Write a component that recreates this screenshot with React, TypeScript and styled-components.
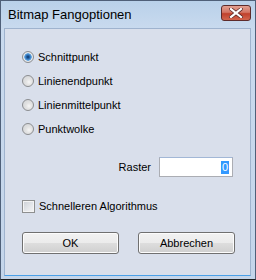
import React from "react";
import styled, { createGlobalStyle } from "styled-components";

const GlobalStyle = createGlobalStyle`
  html, body {
    margin: 0;
    padding: 0;
    background: #ffffff;
  }
`;

const options = ["Schnittpunkt", "Linienendpunkt", "Linienmittelpunkt", "Punktwolke"];

const App = () => {
  return (
    <>
      <GlobalStyle />
      <Window>
        <TitleBar>
          <Title>Bitmap Fangoptionen</Title>
          <CloseButton>
            <svg width="14" height="10" viewBox="0 0 14 10">
              <path d="M2 1 L12 9 M12 1 L2 9" stroke="#5b2a2a" strokeWidth="3.6" strokeLinecap="square" />
              <path d="M2 1 L12 9 M12 1 L2 9" stroke="#ffffff" strokeWidth="2.2" strokeLinecap="square" />
            </svg>
          </CloseButton>
        </TitleBar>
        <Client>
          <RadioList>
            {options.map((label, i) => (
              <OptionRow key={label}>
                <Radio checked={i === 0} />
                <Label>{label}</Label>
              </OptionRow>
            ))}
          </RadioList>
          <RasterRow>
            <Label>Raster</Label>
            <TextBox>
              <Selected>0</Selected>
            </TextBox>
          </RasterRow>
          <OptionRow>
            <CheckBox />
            <Label>Schnelleren Algorithmus</Label>
          </OptionRow>
          <ButtonRow>
            <Button>OK</Button>
            <Button>Abbrechen</Button>
          </ButtonRow>
        </Client>
      </Window>
    </>
  );
};

const Window = styled.div`
  width: 256px;
  height: 280px;
  box-sizing: border-box;
  display: flex;
  flex-direction: column;
  padding: 0 4px 3px 3px;
  background: linear-gradient(180deg, #b9d1ea 0px, #c9daee 28px, #c4d5ea 100%);
  border: 1px solid #4f6079;
  border-bottom-color: #202020;
  font-family: "Liberation Sans", Arial, sans-serif;
`;

const TitleBar = styled.div`
  height: 27px;
  flex: none;
  display: flex;
  align-items: center;
  justify-content: space-between;
  padding-left: 4px;
  padding-right: 0;
`;

const Title = styled.span`
  font-family: "Liberation Sans", Arial, sans-serif;
  font-size: 13px;
  color: #000000;
`;

const CloseButton = styled.div`
  width: 30px;
  height: 16px;
  margin-top: -4px;
  box-sizing: border-box;
  border: 1px solid #5d2b2b;
  border-radius: 3px;
  display: flex;
  align-items: center;
  justify-content: center;
  background: linear-gradient(180deg, #e2a092 0%, #d37564 45%, #c0412c 55%, #d2654e 100%);
`;

const Client = styled.div`
  flex: 1;
  display: flex;
  flex-direction: column;
  padding: 16px 0 0 17px;
  background: #d9dfeb;
  border: 1px solid #9fb3ce;
  border-bottom: 1px solid #4aa0e8;
`;

const RadioList = styled.div`
  display: flex;
  flex-direction: column;
`;

const OptionRow = styled.div`
  height: 24px;
  display: flex;
  align-items: center;
  gap: 4px;
`;

const Label = styled.span`
  font-size: 11px;
  color: #000000;
  white-space: nowrap;
`;

const Radio = styled.span<{ checked?: boolean }>`
  width: 12px;
  height: 12px;
  box-sizing: border-box;
  border-radius: 50%;
  border: 1px solid #8b8d90;
  background: ${(p) =>
    p.checked
      ? "radial-gradient(circle at 50% 50%, #0c2f5e 0px, #2a6fb8 2px, #68a8e0 3.5px, #e9ecef 4px, #d2d4d8 100%)"
      : "radial-gradient(circle at 60% 60%, #f6f6f6 0px, #e3e3e3 3px, #cfd1d4 100%)"};
`;

const CheckBox = styled.span`
  width: 13px;
  height: 13px;
  box-sizing: border-box;
  border: 1px solid #8e8f8f;
  background: linear-gradient(135deg, #cbcfd5 0%, #e6e8eb 60%, #f4f4f4 100%);
  box-shadow: inset 0 0 0 1px #f4f4f4;
`;

const RasterRow = styled.div`
  display: flex;
  align-items: center;
  justify-content: flex-end;
  gap: 8px;
  padding-right: 17px;
  margin: 16px 0 17px;
`;

const TextBox = styled.div`
  width: 74px;
  height: 20px;
  box-sizing: border-box;
  background: #ffffff;
  border: 1px solid #abadb3;
  border-top-color: #a2b7d6;
  display: flex;
  align-items: center;
  justify-content: flex-end;
  padding-right: 3px;
`;

const Selected = styled.span`
  font-size: 11px;
  line-height: 13px;
  background: #3399ff;
  color: #ffffff;
  padding: 0 1px;
`;

const ButtonRow = styled.div`
  display: flex;
  gap: 19px;
  margin-top: 14px;
`;

const Button = styled.div`
  width: 97px;
  height: 22px;
  box-sizing: border-box;
  border: 1px solid #707070;
  border-radius: 3px;
  display: flex;
  align-items: center;
  justify-content: center;
  font-size: 11px;
  color: #000000;
  background: linear-gradient(180deg, #f2f2f2 0%, #ebebeb 50%, #dddddd 51%, #cfcfcf 100%);
  box-shadow: inset 0 0 0 1px #fcfcfc;
`;

export default App;
